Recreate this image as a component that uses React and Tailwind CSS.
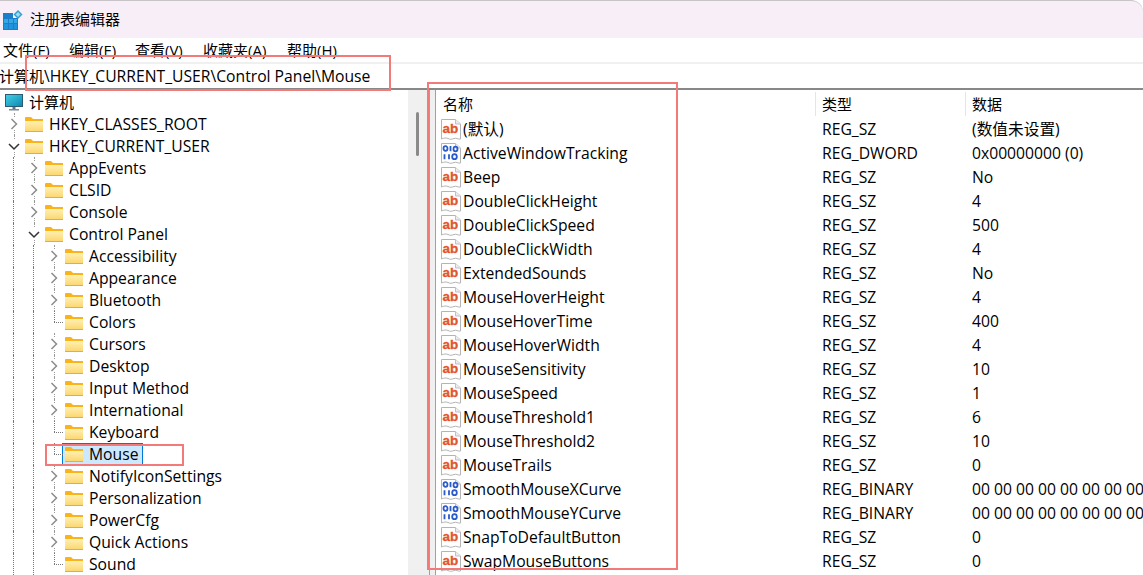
import React from 'react';

const ui = { fontFamily: '"Open Sans", "Noto Sans CJK SC", sans-serif' };

const treeItems = [
  { depth: 0, name: 'HKEY_CLASSES_ROOT', kind: 'closed' },
  { depth: 0, name: 'HKEY_CURRENT_USER', kind: 'open' },
  { depth: 1, name: 'AppEvents', kind: 'closed' },
  { depth: 1, name: 'CLSID', kind: 'closed' },
  { depth: 1, name: 'Console', kind: 'closed' },
  { depth: 1, name: 'Control Panel', kind: 'open' },
  { depth: 2, name: 'Accessibility', kind: 'closed' },
  { depth: 2, name: 'Appearance', kind: 'closed' },
  { depth: 2, name: 'Bluetooth', kind: 'closed' },
  { depth: 2, name: 'Colors', kind: 'leaf' },
  { depth: 2, name: 'Cursors', kind: 'closed' },
  { depth: 2, name: 'Desktop', kind: 'closed' },
  { depth: 2, name: 'Input Method', kind: 'closed' },
  { depth: 2, name: 'International', kind: 'closed' },
  { depth: 2, name: 'Keyboard', kind: 'leaf' },
  { depth: 2, name: 'Mouse', kind: 'leaf', selected: true },
  { depth: 2, name: 'NotifyIconSettings', kind: 'closed' },
  { depth: 2, name: 'Personalization', kind: 'closed' },
  { depth: 2, name: 'PowerCfg', kind: 'closed' },
  { depth: 2, name: 'Quick Actions', kind: 'closed' },
  { depth: 2, name: 'Sound', kind: 'leaf' },
];

const values = [
  ['(默认)', 'REG_SZ', '(数值未设置)'],
  ['ActiveWindowTracking', 'REG_DWORD', '0x00000000 (0)'],
  ['Beep', 'REG_SZ', 'No'],
  ['DoubleClickHeight', 'REG_SZ', '4'],
  ['DoubleClickSpeed', 'REG_SZ', '500'],
  ['DoubleClickWidth', 'REG_SZ', '4'],
  ['ExtendedSounds', 'REG_SZ', 'No'],
  ['MouseHoverHeight', 'REG_SZ', '4'],
  ['MouseHoverTime', 'REG_SZ', '400'],
  ['MouseHoverWidth', 'REG_SZ', '4'],
  ['MouseSensitivity', 'REG_SZ', '10'],
  ['MouseSpeed', 'REG_SZ', '1'],
  ['MouseThreshold1', 'REG_SZ', '6'],
  ['MouseThreshold2', 'REG_SZ', '10'],
  ['MouseTrails', 'REG_SZ', '0'],
  ['SmoothMouseXCurve', 'REG_BINARY', '00 00 00 00 00 00 00 00'],
  ['SmoothMouseYCurve', 'REG_BINARY', '00 00 00 00 00 00 00 00'],
  ['SnapToDefaultButton', 'REG_SZ', '0'],
  ['SwapMouseButtons', 'REG_SZ', '0'],
];

const menus = [
  ['文件(F)', 'w-[66px]'],
  ['编辑(E)', 'w-[66px]'],
  ['查看(V)', 'w-[68px]'],
  ['收藏夹(A)', 'w-[84px]'],
  ['帮助(H)', 'w-[66px]'],
];

const AppLogo = () => (
  <svg width="20" height="20" viewBox="0 0 20 20" className="shrink-0">
    <rect x="0" y="3" width="15" height="17" fill="#1a7fc8" />
    <rect x="1" y="9" width="4" height="4" fill="#35a6e6" />
    <rect x="6" y="9" width="4" height="4" fill="#35a6e6" />
    <rect x="11" y="9" width="3" height="4" fill="#35a6e6" />
    <rect x="1" y="14" width="4" height="5" fill="#1f94dc" />
    <rect x="6" y="14" width="4" height="5" fill="#1f94dc" />
    <rect x="11" y="14" width="3" height="5" fill="#1f94dc" />
    <rect x="10" y="3" width="6" height="5" fill="#f8eef7" />
    <path d="M15 0l4.500 4.500-4.500 4.500-4.500-4.500z" fill="#2f9fd0" />
    <path d="M15 2l2.500 2.500-2.500 2.500-2.500-2.500z" fill="#9adcf0" />
  </svg>
);

const Monitor = () => (
  <svg width="18" height="17" viewBox="0 0 18 17" className="shrink-0">
    <defs>
      <linearGradient id="screen" x1="0" y1="0" x2="1" y2="1">
        <stop offset="0" stopColor="#45d2e8" />
        <stop offset="1" stopColor="#0c86ad" />
      </linearGradient>
    </defs>
    <rect x="0.500" y="0.500" width="17" height="12" fill="url(#screen)" stroke="#2b5a72" />
    <rect x="7.500" y="13" width="3" height="2" fill="#5f7483" />
    <rect x="4" y="15" width="10" height="1.500" fill="#7c8b96" />
  </svg>
);

const Folder = () => (
  <svg width="18" height="15" viewBox="0 0 18 15" className="shrink-0">
    <defs>
      <linearGradient id="folderBody" x1="0" y1="0" x2="0" y2="1">
        <stop offset="0" stopColor="#fff0b4" />
        <stop offset="1" stopColor="#fcd56b" />
      </linearGradient>
    </defs>
    <path d="M0 1a1 1 0 0 1 1-1h5l2 2h10v2H0z" fill="#fbb31c" />
    <rect x="0" y="4" width="18" height="11" fill="url(#folderBody)" />
    <rect x="0" y="14" width="18" height="1" fill="#e8ad36" />
  </svg>
);

const Sheet = ({ children }) => (
  <svg width="20" height="21" viewBox="0 0 20 21" className="shrink-0">
    <path
      d="M0.500 0.500h14l5 4.500v15c-3 .5-4-1.500-6.500-.5s-4 1-6 0-4-.5-6.500.5z"
      fill="#fff"
      stroke="#b4b4b4"
    />
    <path d="M14.500 0.500v4.500h5" fill="#ececec" stroke="#c0c0c0" />
    {children}
  </svg>
);

const StringIcon = () => (
  <Sheet>
    <text
      x="9.500"
      y="14"
      textAnchor="middle"
      fontSize="13.500"
      fontWeight="700"
      fontFamily='"Liberation Sans", sans-serif'
      fill="#e2562c"
      stroke="#e2562c"
      strokeWidth="0.300"
    >
      ab
    </text>
  </Sheet>
);

const BinaryIcon = () => (
  <Sheet>
    <g fill="none" stroke="#2a5bc8" strokeWidth="1.800">
      <ellipse cx="4.500" cy="5.500" rx="2" ry="2.300" />
      <path d="M9.500 3v5.200" />
      <ellipse cx="14.500" cy="6" rx="2" ry="2.300" />
      <path d="M3.500 11.200v5M8 11.200v5" />
      <ellipse cx="13.500" cy="13.700" rx="2.300" ry="2.500" />
    </g>
  </Sheet>
);

const Chevron = ({ open }) => (
  <svg width="12" height="12" viewBox="0 0 12 12" className="shrink-0 bg-white">
    {open ? (
      <path d="M1 4l5 5 5-5" fill="none" stroke="#333" strokeWidth="1.500" />
    ) : (
      <path d="M3.500 1l5 5-5 5" fill="none" stroke="#8c8c8c" strokeWidth="1.500" />
    )}
  </svg>
);

const Guide = () => (
  <div className="w-5 h-full shrink-0 flex justify-center pr-[1px]">
    <div className="h-full border-l border-dotted border-[#777]" />
  </div>
);

const Expander = ({ kind }) => {
  if (kind === 'leaf') {
    return (
      <div className="relative w-5 h-full shrink-0">
        <div className="absolute left-[10px] top-0 h-[11px] border-l border-dotted border-[#777]" />
        <div className="absolute left-[10px] right-[1px] top-[11px] border-t border-dotted border-[#777]" />
      </div>
    );
  }
  return (
    <div className="relative w-5 h-full shrink-0 flex items-center justify-center">
      <div className="absolute left-[10px] top-0 h-full border-l border-dotted border-[#999]" />
      <div className="relative">
        <Chevron open={kind === 'open'} />
      </div>
    </div>
  );
};

const TreeRow = ({ item }) => (
  <div className="relative flex items-center h-[22px] pl-1 text-[15.700px]">
    {item.depth > 0 && <Guide />}
    {item.depth > 1 && <Guide />}
    <Expander kind={item.kind} />
    {item.selected ? (
      <div className="flex items-center h-[22px] w-[81px] -ml-[2px] pl-[2px] bg-[#cce8ff] border border-[#0078d7]">
        <Folder />
        <span className="ml-[6px] pt-[2px] leading-none">{item.name}</span>
      </div>
    ) : (
      <>
        <div className="ml-px"><Folder /></div>
        <span className="ml-[6px] pt-[2px] leading-none">{item.name}</span>
      </>
    )}
  </div>
);

const ValueRow = ({ row }) => (
  <div className="grid grid-cols-[379px_150px_1fr] h-6 items-center whitespace-nowrap text-[15.700px]">
    <div className="flex items-center pl-[5px]">
      {row[1] === 'REG_SZ' ? <StringIcon /> : <BinaryIcon />}
      <span className="ml-[2px] pt-px">{row[0]}</span>
    </div>
    <div className="pl-[7px] pt-px">{row[1]}</div>
    <div className="pl-[7px] pt-px">{row[2]}</div>
  </div>
);

export default function App() {
  return (
    <div
      style={ui}
      className="relative w-[1143px] h-[575px] overflow-hidden bg-white text-[15px] text-black whitespace-nowrap"
    >
      <div className="h-[38px] flex items-center pl-[3px] bg-[#f8eef7] rounded-tr-xl border-t border-[#c8c4c8]">
        <AppLogo />
        <span className="ml-[7px]">注册表编辑器</span>
      </div>

      <div className="h-6 flex items-center pl-[3px]">
        {menus.map(([label, width]) => (
          <div key={label} className={width}>{label}</div>
        ))}
      </div>

      <div className="h-[2px] bg-[#f0f0f0]" />
      <div className="h-6 flex items-center -ml-px">
        计算机<span className="text-[15.700px] pt-[2px]">\HKEY_CURRENT_USER\Control Panel\Mouse</span>
      </div>
      <div className="h-[2px] bg-[#888]" />

      <div className="flex h-[485px]">
        <div className="w-[408px] shrink-0 overflow-hidden pt-px">
          <div className="flex items-center h-[22px] pl-[5px]">
            <Monitor />
            <span className="ml-[6px] leading-none">计算机</span>
          </div>
          {treeItems.map((item) => (
            <TreeRow key={item.name} item={item} />
          ))}
        </div>

        <div className="w-[21px] shrink-0 bg-[#f0f0f0] flex justify-center pt-[22px]">
          <div className="w-[3px] h-[44px] rounded-full bg-[#8a8a8a] -ml-[3px]" />
        </div>

        <div className="w-[7px] shrink-0 bg-[#f0f0f0] border-x border-[#a0a0a0]" />

        <div className="flex-1 min-w-0 overflow-hidden">
          <div className="grid grid-cols-[379px_150px_1fr] h-[27px] items-center">
            <div className="pl-[7px] h-6 leading-6">名称</div>
            <div className="pl-[6px] h-6 leading-6 border-l border-[#e5e5e5]">类型</div>
            <div className="pl-[6px] h-6 leading-6 border-l border-[#e5e5e5]">数据</div>
          </div>
          {values.map((row) => (
            <ValueRow key={row[0]} row={row} />
          ))}
        </div>
      </div>

      <div className="absolute left-[25px] top-[55px] w-[366px] h-[36px] border-2 border-[#f47a7a]" />
      <div className="absolute left-[427px] top-[82px] w-[251px] h-[488px] border-2 border-[#f47a7a]" />
      <div className="absolute left-[45px] top-[444px] w-[139px] h-[22px] border-2 border-[#f47a7a]" />
    </div>
  );
}
